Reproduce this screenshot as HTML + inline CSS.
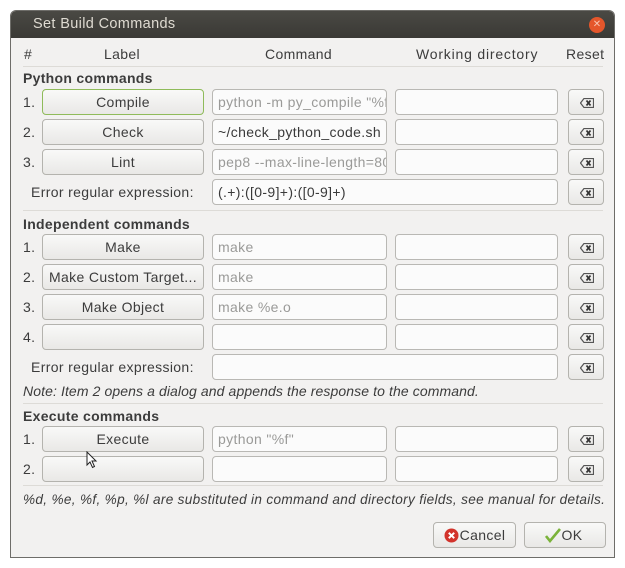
<!DOCTYPE html>
<html><head><meta charset="utf-8"><style>
*{box-sizing:border-box;margin:0;padding:0}
body{width:625px;height:568px;background:#fff;position:relative;font-family:"Liberation Sans","DejaVu Sans",sans-serif;font-size:14px;color:#3c3c3c;overflow:hidden;letter-spacing:0.35px}
.win{position:absolute;left:10px;top:10px;width:605px;height:548px;background:#f2f1f0;border:1px solid #6e6d69;border-radius:6px 6px 0 0;overflow:hidden}
.tb{position:absolute;left:0;top:0;width:100%;height:27px;background:linear-gradient(#4a4944,#3a3935);color:#dfdbd2;font-size:14.5px;line-height:27px;padding-left:22px}
.x{position:absolute;right:9px;top:6px;width:16px;height:16px;border-radius:50%;background:#e5562b;color:#f9c5b1;font-size:10px;line-height:16px;text-align:center;letter-spacing:0}
.a{position:absolute;white-space:nowrap}
.b{position:absolute;height:26px;border:1px solid #b4b3ae;border-radius:4px;background:linear-gradient(#f9f9f8,#e9e8e6);text-align:center;line-height:24px;overflow:hidden;white-space:nowrap}
.e{position:absolute;height:26px;border:1px solid #b9b8b4;border-radius:4px;background:#fbfbfb;line-height:24px;padding-left:5px;overflow:hidden;white-space:nowrap;color:#3a3a3a}
.p{color:#9a9a98}
.r{position:absolute;left:557px;width:36px;height:26px;border:1px solid #b4b3ae;border-radius:4px;background:linear-gradient(#f9f9f8,#e9e8e6)}
.r svg{position:absolute;left:11px;top:8px}
.h{font-weight:bold;letter-spacing:0.3px}
.sep{position:absolute;left:12px;width:580px;height:1px;background:#dddbd7}
.n{position:absolute;left:12px}
</style></head><body>
<div class="win">
<div class="tb">Set Build Commands<div class="x">✕</div></div>
<div class="a" style="left:13px;top:35px">#</div>
<div class="a" style="left:93px;top:35px">Label</div>
<div class="a" style="left:254px;top:35px">Command</div>
<div class="a" style="left:405px;top:35px;letter-spacing:0.8px">Working directory</div>
<div class="a" style="left:555px;top:35px">Reset</div>
<div class="sep" style="top:55px"></div>
<div class="a h" style="left:12px;top:59px">Python commands</div>

<div class="n" style="top:83px">1.</div><div class="b" style="left:31px;top:78px;width:162px;border-color:#8fbb5a">Compile</div><div class="e p" style="left:201px;top:78px;width:175px">python -m py_compile "%f"</div><div class="e" style="left:384px;top:78px;width:163px"></div><div class="r" style="top:78px"><svg width="14" height="10" viewBox="0 0 14 10"><path d="M4 0.5H13.5V9.5H4L0.5 5Z" fill="none" stroke="#555" stroke-width="1.2"/><path d="M6.5 2.5L10.5 7.5M10.5 2.5L6.5 7.5" stroke="#333" stroke-width="1.8"/></svg></div>

<div class="n" style="top:113px">2.</div><div class="b" style="left:31px;top:108px;width:162px">Check</div><div class="e" style="left:201px;top:108px;width:175px">~/check_python_code.sh</div><div class="e" style="left:384px;top:108px;width:163px"></div><div class="r" style="top:108px"><svg width="14" height="10" viewBox="0 0 14 10"><path d="M4 0.5H13.5V9.5H4L0.5 5Z" fill="none" stroke="#555" stroke-width="1.2"/><path d="M6.5 2.5L10.5 7.5M10.5 2.5L6.5 7.5" stroke="#333" stroke-width="1.8"/></svg></div>

<div class="n" style="top:143px">3.</div><div class="b" style="left:31px;top:138px;width:162px">Lint</div><div class="e p" style="left:201px;top:138px;width:175px">pep8 --max-line-length=80</div><div class="e" style="left:384px;top:138px;width:163px"></div><div class="r" style="top:138px"><svg width="14" height="10" viewBox="0 0 14 10"><path d="M4 0.5H13.5V9.5H4L0.5 5Z" fill="none" stroke="#555" stroke-width="1.2"/><path d="M6.5 2.5L10.5 7.5M10.5 2.5L6.5 7.5" stroke="#333" stroke-width="1.8"/></svg></div>

<div class="a" style="left:20px;top:173px">Error regular expression:</div><div class="e" style="left:201px;top:168px;width:346px">(.+):([0-9]+):([0-9]+)</div><div class="r" style="top:168px"><svg width="14" height="10" viewBox="0 0 14 10"><path d="M4 0.5H13.5V9.5H4L0.5 5Z" fill="none" stroke="#555" stroke-width="1.2"/><path d="M6.5 2.5L10.5 7.5M10.5 2.5L6.5 7.5" stroke="#333" stroke-width="1.8"/></svg></div>
<div class="sep" style="top:199px"></div>
<div class="a h" style="left:12px;top:205px">Independent commands</div>

<div class="n" style="top:228px">1.</div><div class="b" style="left:31px;top:223px;width:162px">Make</div><div class="e p" style="left:201px;top:223px;width:175px">make</div><div class="e" style="left:384px;top:223px;width:163px"></div><div class="r" style="top:223px"><svg width="14" height="10" viewBox="0 0 14 10"><path d="M4 0.5H13.5V9.5H4L0.5 5Z" fill="none" stroke="#555" stroke-width="1.2"/><path d="M6.5 2.5L10.5 7.5M10.5 2.5L6.5 7.5" stroke="#333" stroke-width="1.8"/></svg></div>

<div class="n" style="top:258px">2.</div><div class="b" style="left:31px;top:253px;width:162px">Make Custom Target...</div><div class="e p" style="left:201px;top:253px;width:175px">make</div><div class="e" style="left:384px;top:253px;width:163px"></div><div class="r" style="top:253px"><svg width="14" height="10" viewBox="0 0 14 10"><path d="M4 0.5H13.5V9.5H4L0.5 5Z" fill="none" stroke="#555" stroke-width="1.2"/><path d="M6.5 2.5L10.5 7.5M10.5 2.5L6.5 7.5" stroke="#333" stroke-width="1.8"/></svg></div>

<div class="n" style="top:288px">3.</div><div class="b" style="left:31px;top:283px;width:162px">Make Object</div><div class="e p" style="left:201px;top:283px;width:175px">make %e.o</div><div class="e" style="left:384px;top:283px;width:163px"></div><div class="r" style="top:283px"><svg width="14" height="10" viewBox="0 0 14 10"><path d="M4 0.5H13.5V9.5H4L0.5 5Z" fill="none" stroke="#555" stroke-width="1.2"/><path d="M6.5 2.5L10.5 7.5M10.5 2.5L6.5 7.5" stroke="#333" stroke-width="1.8"/></svg></div>

<div class="n" style="top:318px">4.</div><div class="b" style="left:31px;top:313px;width:162px"></div><div class="e" style="left:201px;top:313px;width:175px"></div><div class="e" style="left:384px;top:313px;width:163px"></div><div class="r" style="top:313px"><svg width="14" height="10" viewBox="0 0 14 10"><path d="M4 0.5H13.5V9.5H4L0.5 5Z" fill="none" stroke="#555" stroke-width="1.2"/><path d="M6.5 2.5L10.5 7.5M10.5 2.5L6.5 7.5" stroke="#333" stroke-width="1.8"/></svg></div>

<div class="a" style="left:20px;top:348px">Error regular expression:</div><div class="e" style="left:201px;top:343px;width:346px"></div><div class="r" style="top:343px"><svg width="14" height="10" viewBox="0 0 14 10"><path d="M4 0.5H13.5V9.5H4L0.5 5Z" fill="none" stroke="#555" stroke-width="1.2"/><path d="M6.5 2.5L10.5 7.5M10.5 2.5L6.5 7.5" stroke="#333" stroke-width="1.8"/></svg></div>
<div class="a" style="left:12px;top:372px;font-style:italic;letter-spacing:0.1px">Note: Item 2 opens a dialog and appends the response to the command.</div>
<div class="sep" style="top:392px"></div>
<div class="a h" style="left:12px;top:397px">Execute commands</div>

<div class="n" style="top:420px">1.</div><div class="b" style="left:31px;top:415px;width:162px">Execute</div><div class="e p" style="left:201px;top:415px;width:175px">python "%f"</div><div class="e" style="left:384px;top:415px;width:163px"></div><div class="r" style="top:415px"><svg width="14" height="10" viewBox="0 0 14 10"><path d="M4 0.5H13.5V9.5H4L0.5 5Z" fill="none" stroke="#555" stroke-width="1.2"/><path d="M6.5 2.5L10.5 7.5M10.5 2.5L6.5 7.5" stroke="#333" stroke-width="1.8"/></svg></div>

<div class="n" style="top:450px">2.</div><div class="b" style="left:31px;top:445px;width:162px"></div><div class="e" style="left:201px;top:445px;width:175px"></div><div class="e" style="left:384px;top:445px;width:163px"></div><div class="r" style="top:445px"><svg width="14" height="10" viewBox="0 0 14 10"><path d="M4 0.5H13.5V9.5H4L0.5 5Z" fill="none" stroke="#555" stroke-width="1.2"/><path d="M6.5 2.5L10.5 7.5M10.5 2.5L6.5 7.5" stroke="#333" stroke-width="1.8"/></svg></div>
<svg style="position:absolute;left:75px;top:440px" width="12" height="18" viewBox="0 0 12 18"><path d="M1 1V14L4 11L6.5 16.5L8.5 15.5L6 10H10Z" fill="#fff" stroke="#222" stroke-width="1"/></svg>
<div class="sep" style="top:474px"></div>
<div class="a" style="left:12px;top:481px;font-style:italic;font-size:13.6px;letter-spacing:0.32px">%d, %e, %f, %p, %l are substituted in command and directory fields, see manual for details.</div>

<div class="b" style="left:422px;top:511px;width:83px;line-height:24px;padding-left:16px">Cancel<svg style="position:absolute;left:10px;top:5px" width="15" height="15" viewBox="0 0 15 15"><circle cx="7.5" cy="7.5" r="7" fill="#d2332b"/><path d="M4.8 4.8L10.2 10.2M10.2 4.8L4.8 10.2" stroke="#fff" stroke-width="2"/></svg></div>
<div class="b" style="left:513px;top:511px;width:82px;padding-left:14px">OK<svg style="position:absolute;left:20px;top:5px" width="16" height="15" viewBox="0 0 16 15"><path d="M1 8L5 13L15 1" fill="none" stroke="#7bb33a" stroke-width="2.6"/></svg></div>
</div>
</body></html>
